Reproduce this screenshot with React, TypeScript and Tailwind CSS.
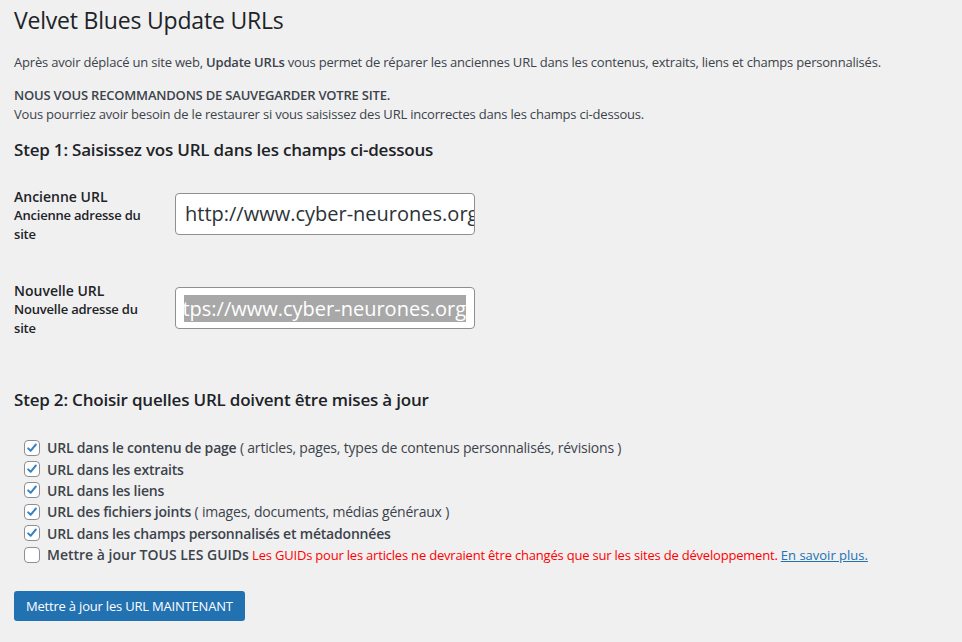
import { useState } from "react";

const font = { fontFamily: '"Open Sans", "Noto Sans", sans-serif' };

type Item = { label: string; note?: string; checked: boolean };

const items: Item[] = [
  { label: "URL dans le contenu de page", note: "( articles, pages, types de contenus personnalisés, révisions )", checked: true },
  { label: "URL dans les extraits", checked: true },
  { label: "URL dans les liens", checked: true },
  { label: "URL des fichiers joints", note: "( images, documents, médias généraux )", checked: true },
  { label: "URL dans les champs personnalisés et métadonnées", checked: true },
];

function Check({ on }: { on: boolean }) {
  return (
    <span className="flex h-4 w-4 shrink-0 items-center justify-center rounded-[4px] border border-[#8c8f94] bg-white">
      {on && (
        <svg viewBox="0 0 20 20" className="h-[18px] w-[18px]">
          <path d="M4.5 10.5l3.5 3.5 7.5-9" fill="none" stroke="#3582c4" strokeWidth="2.8" strokeLinecap="round" strokeLinejoin="round" />
        </svg>
      )}
    </span>
  );
}

function Field({ label, sub, children }: { label: string; sub: string; children: React.ReactNode }) {
  return (
    <div className="flex items-start">
      <div className="w-[161px] shrink-0 text-[13px] leading-[19px] font-semibold tracking-[-0.2px] text-[#1d2327]">
        <div className="text-[14px] tracking-normal">{label}</div>
        <div className="w-[135px]">{sub}</div>
      </div>
      <div className="mt-[6px]">{children}</div>
    </div>
  );
}

export default function App() {
  const [boxes] = useState(items);
  return (
    <div className="min-h-[642px] bg-[#f0f0f1] px-[14px] pt-[6px] text-[13px] tracking-[-0.2px] text-[#3c434a]" style={font}>
      <h1 className="text-[23px] leading-[29px] font-normal text-[#1d2327]">Velvet Blues Update URLs</h1>
      <p className="mt-[18px] leading-[19px]">
        Après avoir déplacé un site web, <b className="font-semibold">Update URLs</b> vous permet de réparer les anciennes URL dans les contenus, extraits, liens et champs personnalisés.
      </p>
      <p className="mt-[14px] leading-[19px]">
        <b className="font-semibold">NOUS VOUS RECOMMANDONS DE SAUVEGARDER VOTRE SITE.</b>
        <br />
        Vous pourriez avoir besoin de le restaurer si vous saisissez des URL incorrectes dans les champs ci-dessous.
      </p>
      <h2 className="mt-[14px] text-[17px] leading-[24px] font-semibold text-[#1d2327]">Step 1: Saisissez vos URL dans les champs ci-dessous</h2>
      <div className="mt-[25px] flex flex-col gap-[37px]">
        <Field label="Ancienne URL" sub="Ancienne adresse du site">
          <div className="flex h-[42px] w-[300px] items-center overflow-hidden rounded-[4px] border border-[#8c8f94] bg-white pl-[9px] text-[20px] tracking-normal whitespace-nowrap text-[#2c3338]">
            http://www.cyber-neurones.org
          </div>
        </Field>
        <Field label="Nouvelle URL" sub="Nouvelle adresse du site">
          <div className="flex h-[42px] w-[300px] items-center rounded-[4px] border border-[#8c8f94] bg-white px-[8px] text-[20px] tracking-normal whitespace-nowrap text-white">
            <div className="flex flex-1 justify-end overflow-hidden">
              <span className="bg-[#a8a8a8] leading-[27px]">https://www.cyber-neurones.org</span>
            </div>
          </div>
        </Field>
      </div>
      <h2 className="mt-[50px] text-[17px] leading-[24px] font-semibold text-[#1d2327]">Step 2: Choisir quelles URL doivent être mises à jour</h2>
      <div className="mt-[25px] flex flex-col pl-[10px]">
        {boxes.map((it) => (
          <label key={it.label} className="flex h-[21.4px] items-center gap-[7px] text-[14px]">
            <Check on={it.checked} />
            <span>
              <b className="font-semibold">{it.label}</b>
              {it.note && <> {it.note}</>}
            </span>
          </label>
        ))}
        <label className="flex h-[21.4px] items-center gap-[7px]">
          <Check on={false} />
          <span>
            <b className="text-[14px] font-semibold tracking-normal">Mettre à jour TOUS LES GUIDs</b>{" "}
            <span className="text-[#ff0000]">Les GUIDs pour les articles ne devraient être changés que sur les sites de développement.</span>{" "}
            <a className="text-[#2271b1] tracking-normal underline">En savoir plus.</a>
          </span>
        </label>
      </div>
      <button className="mt-[26px] h-[30px] rounded-[3px] bg-[#2271b1] px-[12px] text-[13px] text-white">
        Mettre à jour les URL MAINTENANT
      </button>
    </div>
  );
}
